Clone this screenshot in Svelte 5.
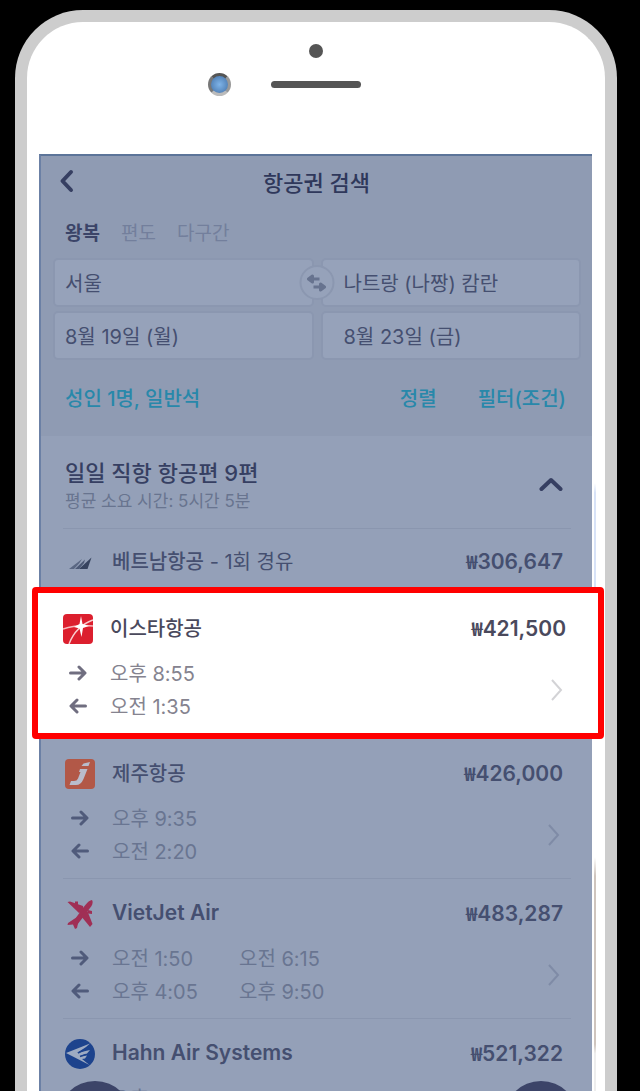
<script lang="ts">
  type Flight = {
    id: string;
    name: string;
    lang?: string;
    note?: string;
    price: string;
    out?: string[];
    back?: string[];
    selected?: boolean;
  };

  const tabs = ['왕복', '편도', '다구간'];
  let activeTab = $state('왕복');

  let from = $state('서울');
  let to = $state('나트랑 (나짱) 캄란');
  let departDate = $state('8월 19일 (월)');
  let returnDate = $state('8월 23일 (금)');

  const flights: Flight[] = [
    { id: 'vietnam', name: '베트남항공', note: '- 1회 경유', price: '306,647' },
    { id: 'eastar', name: '이스타항공', price: '421,500', out: ['오후 8:55'], back: ['오전 1:35'], selected: true },
    { id: 'jeju', name: '제주항공', price: '426,000', out: ['오후 9:35'], back: ['오전 2:20'] },
    { id: 'vietjet', name: 'VietJet Air', lang: 'en', price: '483,287', out: ['오전 1:50', '오전 6:15'], back: ['오후 4:05', '오후 9:50'] },
    { id: 'hahn', name: 'Hahn Air Systems', lang: 'en', price: '521,322', out: ['오후 6:15'], back: ['오전 2:20'] },
  ];

  function swap() {
    [from, to] = [to, from];
  }
</script>

{#snippet logo(id: string)}
  <svg class="logo" viewBox="0 0 30 30" aria-hidden="true">
    {#if id === 'vietnam'}
      <path d="M4 22 L17 12 L14.500 16 L9 22 Z" fill="#5a6783" />
      <path d="M10 22 L20 12.500 L19 16 L14 22 Z" fill="#4c5976" />
      <path d="M14 22 L26.500 10.500 L22.500 22 Z" fill="#36435f" />
    {:else if id === 'eastar'}
      <rect width="30" height="30" rx="4" fill="#dc1f2e" />
      <path d="M0 15 Q14 10 30 12" fill="none" stroke="#f6b9bd" stroke-width="1.500" />
      <path d="M6 30 Q13 12 30 6" fill="none" stroke="#f9cfd1" stroke-width="1.500" />
      <path d="M18 2 L19.500 10 L26 12 L20 14 L18.500 23 L16.500 14.500 L11 13 L16.500 10 Z" fill="#fff" />
    {:else if id === 'jeju'}
      <rect width="30" height="30" rx="4" fill="#b25847" />
      <path d="M15 10 H22.500 L18.500 20 Q16 26 11 26 H4.500 L6 22 H9 Q12 22 13 19.500 L15.500 13 H14 Z" fill="#b9bccb" />
      <path d="M16.500 7 L18.500 4.500 L25 3 L23.500 7 Z" fill="#b9bccb" />
    {:else if id === 'vietjet'}
      <g fill="#a02f55">
        <path d="M27 1 Q28.500 3 26.500 7 L19 17 L12 26 L9 25 L11.500 18 L19.500 7 Q24 1 27 1 Z" />
        <path d="M2.500 3 L5 2.500 L18 7 L19 12 L14 14 Z" />
        <path d="M16 17 L22 11 L27.500 25 L25 28 Z" />
        <path d="M12 18 L3 24 L2.500 26 L8 25.500 L10 30 L12 29 L13.500 22 Z" />
        <path d="M10 2.500 h3 v4 h-3 Z M23 11 l4 1 v3 l-4 -.5 Z" />
      </g>
    {:else}
      <circle cx="15" cy="15" r="15" fill="#1d438d" />
      <path d="M1 14 L25 4.500 L21 8 L12 14 L25 11 L22 14.500 L15 17 L22 16.500 L20 19.500 L17 20 L24.500 26 Z" fill="#9eabc2" />
      <path d="M13 14 L24 8.500 M15 17.500 L21 15.500" stroke="#1d438d" stroke-width="1.500" />
    {/if}
  </svg>
{/snippet}

{#snippet arrow(back: boolean)}
  <svg class="arrow" class:back viewBox="0 0 18 18" aria-hidden="true">
    <path d="M1.500 9 H15 M10 3 L16 9 L10 15" />
  </svg>
{/snippet}

<div class="page">
  <div class="phone">
    <div class="bezel">
      <span class="sensor"></span>
      <div class="ear">
        <span class="lens"></span>
        <span class="speaker"></span>
      </div>
    </div>

    <main class="screen">
      <section class="search">
        <header>
          <button class="icon-btn" aria-label="뒤로">
            <svg width="16" height="24" viewBox="0 0 16 24"><path d="M12 3 L3.500 12 L12 21" class="bold-line" /></svg>
          </button>
          <h1>항공권 검색</h1>
        </header>

        <nav class="tabs">
          {#each tabs as tab}
            <button class:active={activeTab === tab} onclick={() => (activeTab = tab)}>{tab}</button>
          {/each}
        </nav>

        <div class="fields">
          <input aria-label="출발지" bind:value={from} />
          <input class="right" aria-label="도착지" bind:value={to} />
          <input aria-label="가는 날" bind:value={departDate} />
          <input class="right" aria-label="오는 날" bind:value={returnDate} />
          <button class="swap" aria-label="출발지와 도착지 바꾸기" onclick={swap}>
            <svg width="20" height="18" viewBox="0 0 20 18">
              <path d="M13 5 H5 M6 2 L2 5 L6 8 Z M7 13 H15 M14 10 L18 13 L14 16 Z" />
            </svg>
          </button>
        </div>

        <div class="options">
          <button>성인 1명, 일반석</button>
          <button class="sort">정렬</button>
          <button>필터(조건)</button>
        </div>
      </section>

      <section class="results">
        <div class="summary">
          <div>
            <h2>일일 직항 항공편 9편</h2>
            <p>평균 소요 시간: 5시간 5분</p>
          </div>
          <button class="icon-btn fold" aria-label="접기">
            <svg width="24" height="16" viewBox="0 0 24 16"><path d="M2.500 13 L12 4 L21.500 13" class="bold-line" /></svg>
          </button>
        </div>

        <ul>
          {#each flights as flight}
            <li class:selected={flight.selected} class:compact={!flight.out}>
              <a href="#{flight.id}">
                <div class="title">
                  {@render logo(flight.id)}
                  <span class="name">
                    <strong class:latin={flight.lang === 'en'}>{flight.name}</strong>
                    {#if flight.note}{flight.note}{/if}
                  </span>
                  <span class="price"><span class="won">₩</span>{flight.price}</span>
                </div>
                {#if flight.out && flight.back}
                  <div class="times">
                    <div>
                      {#each [flight.out, flight.back] as leg, i}
                        <div class="leg">
                          {@render arrow(i === 1)}
                          {#each leg as time}<span class="time">{time}</span>{/each}
                        </div>
                      {/each}
                    </div>
                    <svg class="more" width="16" height="24" viewBox="0 0 16 24" aria-hidden="true">
                      <path d="M4 3 L13 13 L4 23" />
                    </svg>
                  </div>
                {/if}
              </a>
            </li>
          {/each}
        </ul>
      </section>

      <button class="fab left" aria-label="메뉴"></button>
      <button class="fab right" aria-label="맨 위로"></button>
    </main>
  </div>
</div>

<style>
  :global(body) {
    margin: 0;
    background: #000;
  }

  .page {
    box-sizing: border-box;
    height: 100vh;
    padding: 10px 23px 0 15px;
    overflow: hidden;
    font-family: Inter, 'Noto Sans CJK KR', sans-serif;
    font-size: 20px;
    color: #454f70;
  }

  .phone {
    box-sizing: border-box;
    height: 100%;
    padding: 0 13px 0 12px;
    border: 12px solid #cdcdcd;
    border-bottom: 0;
    border-radius: 68px 68px 0 0;
    background: #fff;
    display: flex;
    flex-direction: column;
  }

  .bezel {
    flex: none;
    height: 110px;
    padding-top: 22px;
  }

  .sensor {
    display: block;
    width: 14px;
    height: 14px;
    margin: 0 auto;
    border-radius: 50%;
    background: #555;
  }

  .ear {
    display: grid;
    grid-template-columns: 1fr 90px 1fr;
    align-items: center;
    margin-top: 15px;
  }

  .lens {
    box-sizing: border-box;
    justify-self: end;
    width: 23px;
    height: 23px;
    margin-right: 40px;
    border: 3px solid #777;
    border-color: #555 #999 #bbb #777;
    border-radius: 50%;
    background: radial-gradient(circle, #7fb4e8 0%, #5585bb 70%, #40638c 100%);
  }

  .speaker {
    height: 7px;
    border-radius: 4px;
    background: #555;
  }

  .screen {
    position: relative;
    flex: 1;
    min-height: 0;
    border-top: 2px solid #5c7499;
    border-left: 2px solid #6b80a5;
    background: #94a0b8;
    display: flex;
    flex-direction: column;
  }

  /* thin edge of the glass to the right of the display */
  .screen::after {
    content: '';
    position: absolute;
    top: 0;
    right: -4px;
    bottom: 0;
    width: 2px;
    background: linear-gradient(#fff 35%, #d8e3f8 36%, #d8e3f8 60%, #fff 62%, #fff 75%, #cfc5be 77%, #cfc5be 95%, #eee 96%);
  }

  button {
    padding: 0;
    border: 0;
    background: none;
    font: inherit;
    color: inherit;
    cursor: pointer;
  }

  .icon-btn {
    display: flex;
  }

  .fold {
    margin-bottom: 4px;
  }

  .bold-line {
    fill: none;
    stroke: #363f62;
    stroke-width: 4;
    stroke-linecap: round;
    stroke-linejoin: round;
  }

  .search {
    flex: none;
    background: #8f9bb3;
  }

  header {
    display: grid;
    grid-template-columns: 1fr auto 1fr;
    align-items: center;
    height: 50px;
    padding: 0 18px;
  }

  h1 {
    margin: 0;
    font-size: 22px;
    font-weight: 500;
    color: #2f385b;
  }

  .tabs {
    display: flex;
    align-items: center;
    gap: 21px;
    height: 50px;
    padding: 0 24px 2px;
    font-size: 19px;
    color: #737f9c;
  }

  .tabs .active {
    font-weight: 700;
    color: #3b4468;
  }

  .fields {
    position: relative;
    display: grid;
    grid-template-columns: 1fr 1fr;
    gap: 4px 7px;
    padding: 0 11px 0 12px;
  }

  input {
    box-sizing: border-box;
    width: 100%;
    min-width: 0;
    height: 49px;
    padding: 0 10px;
    border: 2px solid #8b97b0;
    border-radius: 5px;
    background: #96a2ba;
    font: inherit;
    color: #454f70;
  }

  input.right {
    padding-left: 21px;
  }

  .swap {
    position: absolute;
    top: 7px;
    left: 50%;
    transform: translateX(-50%);
    display: flex;
    align-items: center;
    justify-content: center;
    box-sizing: border-box;
    width: 35px;
    height: 35px;
    border: 2px solid #8b97b0;
    border-radius: 50%;
    background: #96a2ba;
  }

  .swap path {
    fill: #67738f;
    stroke: #67738f;
    stroke-width: 3;
    stroke-linejoin: round;
  }

  .options {
    display: flex;
    align-items: center;
    gap: 41px;
    height: 74px;
    padding: 0 26px 2px 24px;
    font-weight: 500;
    color: #2888aa;
  }

  .sort {
    margin-left: auto;
  }

  .results {
    flex: 1;
    min-height: 0;
    overflow: hidden;
    margin-left: -9px;
    margin-right: -12px;
    padding: 0 12px 0 9px;
  }

  .summary {
    display: flex;
    align-items: center;
    justify-content: space-between;
    margin: 0 21px 0 22px;
    padding: 22px 8px 14px 2px;
    border-bottom: 1px solid #8a96af;
  }

  h2 {
    margin: 0;
    font-size: 22px;
    font-weight: 500;
    line-height: 30px;
    color: #363f62;
  }

  p {
    margin: 0;
    font-size: 17px;
    line-height: 26px;
    color: #68748f;
  }

  ul {
    margin: 0;
    padding: 0;
    list-style: none;
  }

  li {
    margin: 0 21px 0 22px;
    border-bottom: 1px solid #8a96af;
  }

  a {
    display: block;
    padding: 19px 8px 11px 2px;
    color: inherit;
    text-decoration: none;
  }

  .compact {
    border-bottom: 0;
  }

  .compact a {
    padding: 17px 8px 13px 2px;
  }

  .selected {
    position: relative;
    z-index: 1;
    margin: 0 -12px 0 -9px;
    border: 6px solid #f00;
    border-radius: 4px;
    background: #fff;
    color: #4a495c;
  }

  .selected a {
    padding: 20px 32px 11px 25px;
  }

  .title {
    display: flex;
    align-items: center;
    height: 28px;
  }

  .logo {
    flex: none;
    width: 30px;
    height: 30px;
    margin: 4px 17px 0 0;
  }

  .name {
    flex: 1;
    white-space: nowrap;
  }

  strong {
    font-weight: 500;
  }

  .latin,
  .price {
    font-size: 21px;
    font-weight: 600;
  }

  .won {
    font-family: 'Noto Sans CJK KR', sans-serif;
    font-size: 19px;
  }

  .times {
    display: flex;
    align-items: center;
    justify-content: space-between;
    margin-top: 15px;
    color: #697591;
  }

  .selected .times {
    color: #85838f;
  }

  .leg {
    display: flex;
    align-items: center;
    height: 33px;
  }

  .arrow {
    width: 18px;
    height: 18px;
    margin: 0 23px 0 6px;
    fill: none;
    stroke: #505b7b;
    stroke-width: 3;
    stroke-linecap: round;
    stroke-linejoin: round;
  }

  .back {
    transform: scaleX(-1);
    margin: 0 23px 0 6px;
  }

  .selected .arrow {
    stroke: #706e80;
  }

  .time {
    width: 127px;
  }

  .more {
    margin-right: 2px;
    fill: none;
    stroke: #7f8ba6;
    stroke-width: 2;
  }

  .selected .more {
    stroke: #d3d3d6;
  }

  .fab {
    position: absolute;
    bottom: -64px;
    width: 74px;
    height: 74px;
    border-radius: 50%;
    background: #3c4468;
  }

  .fab.left {
    left: 17px;
  }

  .fab.right {
    right: 14px;
  }
</style>
